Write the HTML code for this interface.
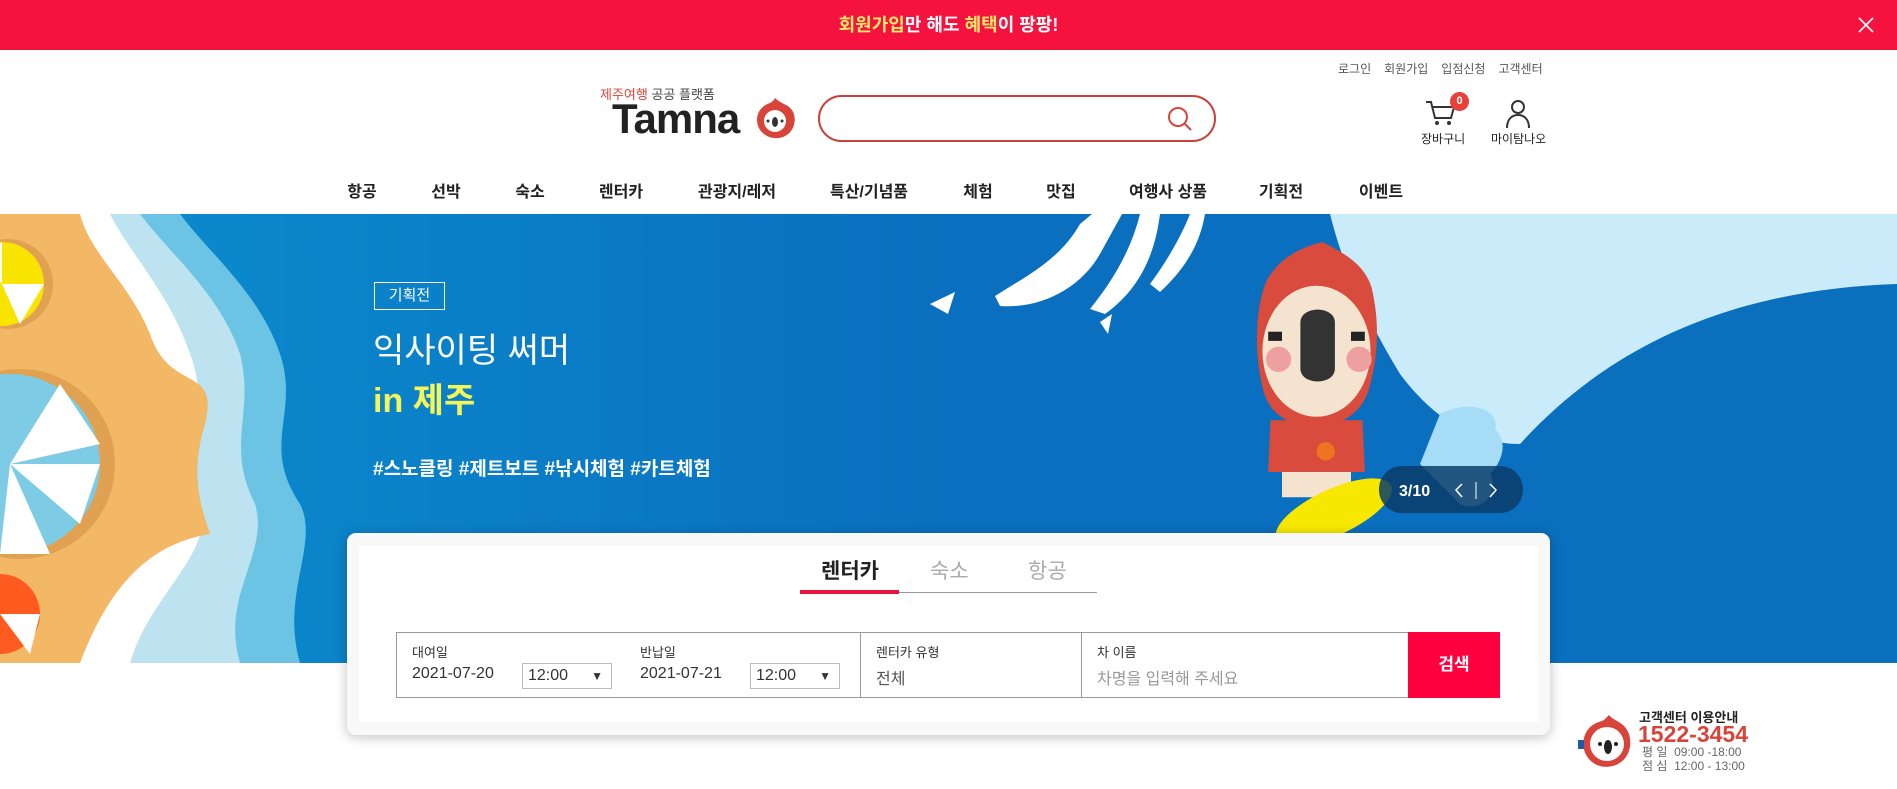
<!DOCTYPE html>
<html><head><meta charset="utf-8">
<style>
*{margin:0;padding:0;box-sizing:border-box}
body{width:1897px;height:789px;overflow:hidden;background:#fff;font-family:"Liberation Sans","Noto Sans CJK KR",sans-serif;position:relative;color:#222}
.abs{position:absolute}
.topbar{left:0;top:0;width:1897px;height:50px;background:#f5123f;color:#fff;font-size:18px;font-weight:bold;text-align:center;line-height:50px}
.topbar .y{color:#ffe96b}
.links{top:60px;left:1338px;font-size:12px;color:#555;white-space:nowrap}
.links span{margin-right:13px}
.nav{top:178px;font-size:16px;font-weight:bold;color:#222;transform:translateX(-50%);white-space:nowrap}
</style></head><body>
<div class="abs topbar"><span class="y">회원가입</span>만 해도 <span class="y">혜택</span>이 팡팡!</div>
<svg class="abs" style="left:1858px;top:17px" width="16" height="16"><path d="M1 1L15 15M15 1L1 15" stroke="#fff" stroke-width="1.6"/></svg>
<div class="abs links"><span>로그인</span><span>회원가입</span><span>입점신청</span><span>고객센터</span></div>

<div class="abs" style="left:600px;top:84px;font-size:13px;color:#444;white-space:nowrap"><span style="color:#d9443a">제주여행</span> 공공 플랫폼</div>
<div class="abs" style="left:612px;top:98px;font-size:42px;font-weight:bold;color:#222;letter-spacing:-1px;line-height:42px">Tamna</div>
<svg class="abs" style="left:752px;top:95px" width="46" height="46"><path d="M23 3C26 6 30 8 34 10C42 14 44 22 42 30C39 40 30 44 22 43C12 42 5 34 5 25C5 15 12 10 18 8C20 7 22 5 23 3Z" fill="#d9443a"/><circle cx="23" cy="26" r="11" fill="#fff"/><ellipse cx="23" cy="27" rx="3" ry="5" fill="#333"/><circle cx="16" cy="26" r="1.5" fill="#333"/><circle cx="30" cy="26" r="1.5" fill="#333"/></svg>
<div class="abs" style="left:818px;top:95px;width:398px;height:47px;border:2px solid #c8403a;border-radius:24px"></div>
<svg class="abs" style="left:1166px;top:105px" width="28" height="28"><circle cx="12" cy="12" r="9" stroke="#d9443a" stroke-width="2" fill="none"/><path d="M19 19L25 25" stroke="#d9443a" stroke-width="2"/></svg>

<svg class="abs" style="left:1424px;top:98px" width="34" height="30"><path d="M2 4H7L11 20H27L30 9H9" stroke="#333" stroke-width="2" fill="none"/><circle cx="13" cy="25" r="2" fill="#333"/><circle cx="25" cy="25" r="2" fill="#333"/></svg>
<div class="abs" style="left:1450px;top:92px;width:19px;height:19px;border-radius:50%;background:#e8413b;color:#fff;font-size:11px;font-weight:bold;text-align:center;line-height:19px">0</div>
<div class="abs" style="left:1421px;top:130px;font-size:12px;color:#222">장바구니</div>
<svg class="abs" style="left:1504px;top:99px" width="28" height="30"><circle cx="14" cy="8" r="6" stroke="#333" stroke-width="2" fill="none"/><path d="M3 29C3 20 8 16 14 16C20 16 25 20 25 29" stroke="#333" stroke-width="2" fill="none"/></svg>
<div class="abs" style="left:1491px;top:130px;font-size:12px;color:#222">마이탐나오</div>

<div class="abs nav" style="left:362px">항공</div>
<div class="abs nav" style="left:446px">선박</div>
<div class="abs nav" style="left:530px">숙소</div>
<div class="abs nav" style="left:621px">렌터카</div>
<div class="abs nav" style="left:737px">관광지/레저</div>
<div class="abs nav" style="left:869px">특산/기념품</div>
<div class="abs nav" style="left:978px">체험</div>
<div class="abs nav" style="left:1061px">맛집</div>
<div class="abs nav" style="left:1168px">여행사 상품</div>
<div class="abs nav" style="left:1281px">기획전</div>
<div class="abs nav" style="left:1381px">이벤트</div>

<svg class="abs" style="left:0;top:214px" width="1897" height="449">
<defs><linearGradient id="bg" x1="0" x2="1"><stop offset="0" stop-color="#0b8fd0"/><stop offset="0.5" stop-color="#0a6fbe"/><stop offset="1" stop-color="#0a6fbd"/></linearGradient></defs>
<rect width="1897" height="449" fill="url(#bg)"/>
<path d="M1330 0H1897V70C1750 75 1620 120 1520 230C1470 230 1430 200 1400 160C1370 110 1345 60 1330 0Z" fill="#c9ebfa"/>
<path d="M0 0H180C210 40 260 80 280 140C300 200 260 230 300 290C320 330 280 380 300 449H0Z" fill="#6cc4e4"/>
<path d="M0 0H140C170 40 220 80 240 140C255 200 225 230 255 290C270 340 220 380 240 449H0Z" fill="#bde3f0"/>
<path d="M0 0H110C130 40 170 80 190 140C210 190 185 230 200 290C215 340 150 380 130 449H0Z" fill="#fff"/>
<path d="M0 0H80C90 40 130 70 150 120C170 180 220 150 205 210C190 260 200 290 210 320C150 330 110 370 80 449H0Z" fill="#f2b866"/>
<circle cx="8" cy="70" r="45" fill="#e0a252"/>
<circle cx="2" cy="70" r="42" fill="#f9e400"/>
<path d="M2 70L44 70L20 110ZM2 70L2 28L-20 40Z" fill="#fff"/>
<circle cx="20" cy="250" r="95" fill="#e0a252"/>
<circle cx="10" cy="250" r="90" fill="#7ecbe6"/>
<path d="M10 250L100 250L80 310ZM10 250L60 170L100 230ZM10 250L50 340L0 340Z" fill="#fff"/>
<circle cx="0" cy="400" r="40" fill="#ff5a1f"/>
<path d="M0 400L40 400L30 440Z" fill="#fff"/>
<path d="M995 82C1030 60 1060 45 1080 10L1092 0H1122L1100 40C1080 75 1040 95 1000 92Z" fill="#fff"/>
<path d="M1090 95C1110 70 1130 40 1140 0H1160C1155 40 1140 75 1105 100Z" fill="#fff"/>
<path d="M1150 70C1165 50 1180 25 1190 0H1205C1200 30 1185 55 1160 78Z" fill="#fff"/>
<path d="M930 90L955 78L948 100Z M1100 108L1112 100L1108 120Z" fill="#fff"/>
<path d="M1440 200C1470 185 1500 195 1495 215C1510 230 1500 250 1490 260C1500 280 1480 300 1460 290L1420 250Z" fill="#a6dcf5"/>
<g transform="translate(1236,28) scale(1.15)">
<path d="M75 0C95 10 112 20 118 40C125 70 124 100 115 130C108 150 90 160 70 160C45 160 30 150 24 130C16 100 16 60 26 35C36 15 55 5 75 0Z" fill="#d94b3c"/>
<ellipse cx="70" cy="95" rx="47" ry="57" fill="#f4e3cf"/>
<path d="M56 70C56 55 86 55 86 70L86 110C86 125 56 125 56 110Z" fill="#333"/>
<circle cx="37" cy="102" r="11" fill="#eea0a0"/><circle cx="107" cy="102" r="11" fill="#eea0a0"/>
<rect x="28" y="78" width="12" height="8" fill="#222"/><rect x="100" y="78" width="12" height="8" fill="#222"/>
<path d="M30 155H110L112 200H28Z" fill="#d94b3c"/>
<path d="M40 200H100L100 222H40Z" fill="#f4e3cf"/>
<ellipse cx="85" cy="235" rx="55" ry="20" fill="#f8e800" transform="rotate(-25 85 235)"/>
<circle cx="78" cy="182" r="8" fill="#ee7422"/>
</g>
<rect x="1379" y="252" width="144" height="47" rx="23" fill="#0b3d6b" opacity="0.85"/>
<text x="1399" y="282" font-size="16" font-weight="bold" fill="#fff" font-family="Liberation Sans">3/10</text>
<path d="M1462 270L1456 276L1462 283M1490 270L1496 276L1490 283" stroke="#fff" stroke-width="1.5" fill="none"/>
<path d="M1476 268V285" stroke="#fff"/>
</svg>
<div class="abs" style="left:374px;top:282px;width:71px;height:28px;border:1px solid #fff;color:#fff;font-size:15px;text-align:center;line-height:26px">기획전</div>
<div class="abs" style="left:373px;top:329px;color:#fff;font-size:34px;line-height:44px">익사이팅 써머</div>
<div class="abs" style="left:373px;top:379px;color:#f3f55a;font-size:34px;line-height:44px;font-weight:bold">in 제주</div>
<div class="abs" style="left:373px;top:454px;color:#fff;font-size:19px;font-weight:bold">#스노클링 #제트보트 #낚시체험 #카트체험</div>

<div class="abs" style="left:347px;top:533px;width:1203px;height:202px;background:#f8f8f8;border-radius:9px;box-shadow:0 2px 12px rgba(0,0,0,.25)"></div>
<div class="abs" style="left:359px;top:546px;width:1180px;height:176px;background:#fff"></div>
<div class="abs" style="left:821px;top:555px;font-size:21px;font-weight:bold;color:#222">렌터카</div>
<div class="abs" style="left:930px;top:555px;font-size:21px;color:#aaa">숙소</div>
<div class="abs" style="left:1028px;top:555px;font-size:21px;color:#aaa">항공</div>
<div class="abs" style="left:800px;top:592px;width:297px;height:1px;background:#999"></div>
<div class="abs" style="left:800px;top:590px;width:99px;height:4px;background:#e8163f"></div>
<div class="abs" style="left:396px;top:632px;width:1104px;height:66px;border:1px solid #999"></div>
<div class="abs" style="left:860px;top:632px;width:1px;height:66px;background:#999"></div>
<div class="abs" style="left:1081px;top:632px;width:1px;height:66px;background:#999"></div>
<div class="abs" style="left:1408px;top:632px;width:92px;height:66px;background:#ff003f;color:#fff;font-size:17px;font-weight:bold;text-align:center;line-height:66px">검색</div>
<div class="abs" style="left:412px;top:642px;font-size:13px;color:#333">대여일</div>
<div class="abs" style="left:412px;top:665px;font-size:16px;color:#333">2021-07-20</div>
<div class="abs" style="left:522px;top:663px;width:90px;height:26px;border:1px solid #bbb;font-size:16px;line-height:24px;padding-left:5px;color:#333">12:00<span style="position:absolute;right:8px;font-size:12px">▼</span></div>
<div class="abs" style="left:640px;top:642px;font-size:13px;color:#333">반납일</div>
<div class="abs" style="left:640px;top:665px;font-size:16px;color:#333">2021-07-21</div>
<div class="abs" style="left:750px;top:663px;width:90px;height:26px;border:1px solid #bbb;font-size:16px;line-height:24px;padding-left:5px;color:#333">12:00<span style="position:absolute;right:8px;font-size:12px">▼</span></div>
<div class="abs" style="left:876px;top:642px;font-size:13px;color:#333">렌터카 유형</div>
<div class="abs" style="left:876px;top:665px;font-size:16px;color:#555">전체</div>
<div class="abs" style="left:1097px;top:642px;font-size:13px;color:#333">차 이름</div>
<div class="abs" style="left:1097px;top:665px;font-size:16px;color:#999">차명을 입력해 주세요</div>

<svg class="abs" style="left:1576px;top:712px" width="60" height="60"><path d="M33 3C37 8 43 9 48 14C56 22 56 36 50 45C42 56 26 58 16 50C6 42 5 28 11 19C16 11 24 10 28 8Z" fill="#d9443a"/><circle cx="31" cy="32" r="17" fill="#fff"/><ellipse cx="32" cy="35" rx="4" ry="7" fill="#222"/><circle cx="24" cy="32" r="2" fill="#222"/><circle cx="40" cy="32" r="2" fill="#222"/><rect x="2" y="28" width="6" height="9" fill="#1e5aa8"/></svg>
<div class="abs" style="left:1639px;top:707px;font-size:13px;font-weight:bold;color:#222">고객센터 이용안내</div>
<div class="abs" style="left:1638px;top:721px;font-size:23px;font-weight:bold;color:#d9443a">1522-3454</div>
<div class="abs" style="left:1642px;top:745px;font-size:12px;color:#666;line-height:14px">평 일&nbsp; 09:00 -18:00<br>점 심&nbsp; 12:00 - 13:00</div>
</body></html>
